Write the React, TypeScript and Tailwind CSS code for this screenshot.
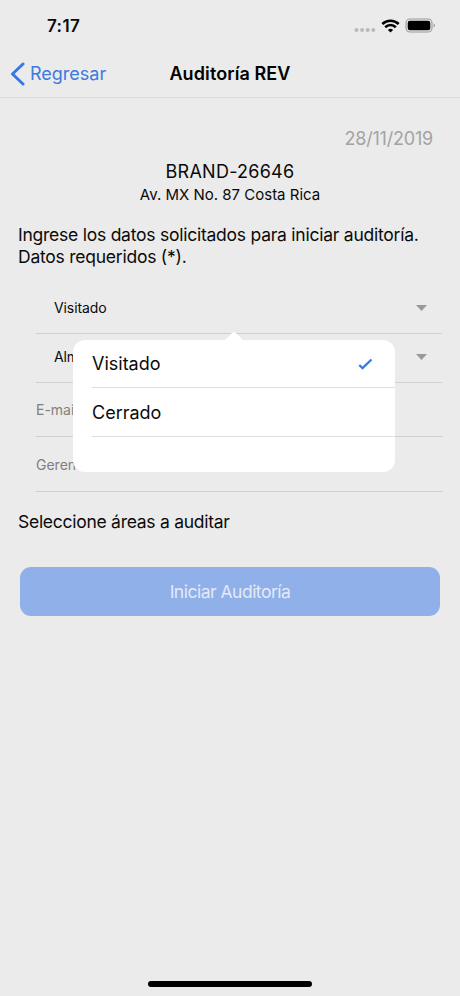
import { useState } from "react";

function StatusBar() {
  return (
    <div className="flex h-[50px] items-center justify-between pl-[47px] pr-[24px] pt-px">
      <span className="text-[17px] font-semibold leading-[20px] tracking-[0.4px]">7:17</span>
      <div className="flex items-center">
        <svg width="22" height="14" viewBox="0 0 22 14" fill="#b9b9b9">
          <circle cx="2.5" cy="11" r="2" />
          <circle cx="8.1" cy="11" r="2" />
          <circle cx="13.7" cy="11" r="2" />
          <circle cx="19.3" cy="11" r="2" />
        </svg>
        <svg className="ml-[5px]" width="19" height="14" viewBox="0 0 19 14" fill="none" stroke="#000" strokeWidth="2.6">
          <path d="M1.3 5a11.8 11.8 0 0 1 16.4 0" />
          <path d="M4.2 8.200a7.6 7.6 0 0 1 10.6 0" />
          <path d="M9.5 13.4 6.9 10.9a3.8 3.8 0 0 1 5.2 0z" fill="#000" stroke="none" />
        </svg>
        <svg className="ml-[5px]" width="31" height="15" viewBox="0 0 31 15">
          <rect x="1" y="1" width="26" height="13" rx="4" fill="none" stroke="#999" strokeWidth="1.1" />
          <rect x="2.7" y="2.8" width="22.6" height="9.4" rx="2.2" fill="#000" />
          <path d="M28.6 5.4c1.8.7 1.8 3.5 0 4.2z" fill="#999" />
        </svg>
      </div>
    </div>
  );
}

function SelectRow({ value, onClick }: { value: string; onClick?: () => void }) {
  return (
    <button type="button" onClick={onClick}
      className="flex h-[49px] w-[406px] items-center justify-between border-b border-[#d0d0d0] pb-[2px] pl-[18px] pr-[15px] text-left text-[14px] tracking-[-0.1px]">
      <span className="pb-px">{value}</span>
      <svg width="11" height="6" viewBox="0 0 11 6" fill="#999"><path d="M0 0h11L5.5 6z" /></svg>
    </button>
  );
}

function Popover({ options, value, onSelect }: { options: string[]; value: string; onSelect: (v: string) => void }) {
  return (
    <div className="absolute left-[73px] top-[340px] h-[132px] w-[322px] rounded-[12px] bg-white pl-[19px]">
      <svg className="absolute -top-[9px] left-[146px]" width="30" height="10" viewBox="0 0 30 10" fill="#fff">
        <path d="M3 10c2 0 3-1 4.500-2.500L13 2q2-2 4 0l5.500 5.500C24 9 25 10 27 10z" />
      </svg>
      {options.map((o) => (
        <button key={o} type="button" onClick={() => onSelect(o)}
          className="flex h-[49px] w-full items-center justify-between border-b border-[#dedede] pr-[22px] text-[18px] first-of-type:h-[48px]">
          <span>{o}</span>
          {o === value && (
            <svg width="15" height="12" viewBox="0 0 15 12" fill="none" stroke="#3478f0" strokeWidth="2.3">
              <path d="m1.300 7 3.200 3.200L13.500 1.500" />
            </svg>
          )}
        </button>
      ))}
    </div>
  );
}

export default function App() {
  const [status, setStatus] = useState("Visitado");
  const [open, setOpen] = useState(true);

  return (
    <div className="relative flex h-[996px] w-[460px] flex-col overflow-hidden bg-[#ebebeb] font-['Inter','Liberation_Sans',sans-serif] text-[#0a0a0a]">
      <StatusBar />
      <header className="grid h-[48px] grid-cols-[1fr_auto_1fr] items-center border-b border-[#dcdcdc] pl-[10px] pr-[10px]">
        <button type="button" className="flex items-center gap-[5px] text-[18px] text-[#3c7ae0]">
          <svg width="15" height="24" viewBox="0 0 15 24" fill="none" stroke="#3478e8" strokeWidth="3" strokeLinecap="round" strokeLinejoin="round">
            <path d="M13 2 2.500 12 13 22" />
          </svg>
          Regresar
        </button>
        <h1 className="text-[18px] font-semibold tracking-[0.1px] text-black">Auditoría REV</h1>
      </header>

      <p className="mt-[29px] pr-[27px] text-right text-[18px] leading-[24px] tracking-[-0.2px] text-[#a3a3a3]">28/11/2019</p>
      <p className="mt-[9px] text-center text-[18px] leading-[24px] tracking-[0.25px]">BRAND-26646</p>
      <p className="text-center text-[15px] leading-[22px]">Av. MX No. 87 Costa Rica</p>
      <p className="mt-[18px] whitespace-nowrap pl-[18px] text-[17.5px] leading-[22px] tracking-[-0.24px]">
        Ingrese los datos solicitados para iniciar auditoría.<br />
        Datos requeridos (*).
      </p>

      <div className="mt-[17px] flex flex-col pl-[36px] text-[14px]">
        <SelectRow value={status} onClick={() => setOpen(!open)} />
        <SelectRow value="Alm" />
        <div className="flex h-[54px] w-[407px] items-center border-b border-[#d0d0d0] text-[#808080]">E-mail</div>
        <div className="flex h-[55px] w-[407px] items-center border-b border-[#d0d0d0] text-[#808080]">Geren</div>
      </div>

      <p className="mt-[18px] pl-[18px] text-[17.5px] leading-[24px] tracking-[-0.27px]">Seleccione áreas a auditar</p>
      <button type="button" className="mx-[20px] mt-[33px] h-[49px] rounded-[11px] bg-[#90b0ea] pt-[2px] text-[17.5px] tracking-[-0.5px] text-[#e3eaf6]">
        Iniciar Auditoría
      </button>

      <div className="mb-[9px] mt-auto h-[6px] w-[164px] self-center rounded-full bg-black" />

      {open && (
        <Popover options={["Visitado", "Cerrado"]} value={status}
          onSelect={(v) => { setStatus(v); setOpen(false); }} />
      )}
    </div>
  );
}
